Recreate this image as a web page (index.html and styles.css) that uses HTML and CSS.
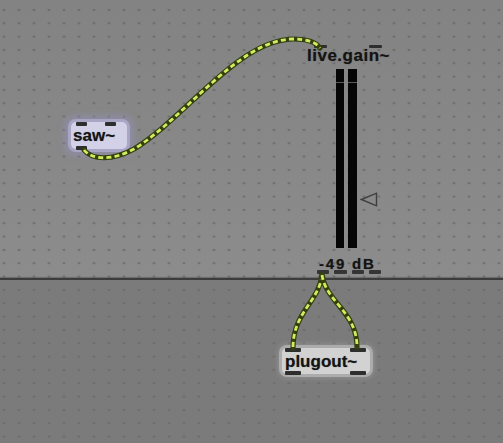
FILE: index.html
```html
<!DOCTYPE html>
<html>
<head>
<meta charset="utf-8">
<link rel="stylesheet" href="styles.css">
</head>
<body>
<div class="patcher">
  <div class="upper"></div>
  <div class="divider"></div>
  <div class="lower"></div>

  <div class="obj saw">
    <span class="port in in-l"></span>
    <span class="port in in-r"></span>
    <span class="label">saw~</span>
    <span class="port out out-l"></span>
  </div>

  <div class="gain">
    <span class="port gain-in gin-l"></span>
    <span class="port gain-in gin-r"></span>
    <div class="gain-title">live.gain~</div>
    <div class="meter">
      <div class="bar"><span class="seg"></span></div>
      <div class="bar bar-r"><span class="seg"></span></div>
    </div>
    <svg class="slider" width="18" height="15" viewBox="0 0 18 15"><polygon points="16.5,1.2 16.5,13.8 1.5,7.5" fill="none" stroke="#3e3e3e" stroke-width="1.4"/></svg>
    <div class="gain-value">-49 dB</div>
    <div class="gain-outs">
      <span class="port gout"></span>
      <span class="port gout"></span>
      <span class="port gout"></span>
      <span class="port gout"></span>
    </div>
  </div>

  <div class="obj plugout">
    <span class="port in pin-l"></span>
    <span class="port in pin-r"></span>
    <span class="label">plugout~</span>
    <span class="port out pout-l"></span>
    <span class="port out pout-r"></span>
  </div>

  <svg class="cords" width="503" height="443" viewBox="0 0 503 443">
    <g fill="none" stroke-linecap="round">
      <path class="cord-bg" d="M84 150 C 92 160, 112 161, 134 149 C 185 118, 238 40, 293 39 C 306 39, 316 42, 320 48"/>
      <path class="cord-fg" d="M84 150 C 92 160, 112 161, 134 149 C 185 118, 238 40, 293 39 C 306 39, 316 42, 320 48"/>
      <path class="cord-bg" d="M322 275 C 319 302, 293 312, 293 348"/>
      <path class="cord-fg" d="M322 275 C 319 302, 293 312, 293 348"/>
      <path class="cord-bg" d="M322 275 C 326 302, 357 312, 357 347"/>
      <path class="cord-fg" d="M322 275 C 326 302, 357 312, 357 347"/>
    </g>
  </svg>
</div>
</body>
</html>
```

FILE: styles.css
```css
html, body {
  margin: 0;
  padding: 0;
}
body {
  width: 503px;
  height: 443px;
  overflow: hidden;
  font-family: "Liberation Sans", Arial, sans-serif;
}
.patcher {
  position: relative;
  width: 503px;
  height: 443px;
  display: flex;
  flex-direction: column;
}
.upper {
  height: 278px;
  background:
    radial-gradient(circle, rgba(95,95,95,0.75) 0.8px, rgba(95,95,95,0) 1.5px) -3.5px 3.33px / 15px 13.333px,
    linear-gradient(#838383, #8c8c8c);
}
.divider {
  height: 2px;
  background: #3c3c3c;
  box-shadow: 0 1px 1px rgba(60,60,60,0.5), 0 -1px 1px rgba(60,60,60,0.4);
}
.lower {
  flex: 1;
  background:
    radial-gradient(circle, rgba(95,95,95,0.6) 0.8px, rgba(95,95,95,0) 1.5px) -3.5px 3.33px / 15px 13.333px,
    #7b7b7b;
}

.obj {
  position: absolute;
  box-sizing: border-box;
  border-radius: 5px;
  color: #141414;
  font-weight: bold;
  font-size: 17px;
  line-height: 1;
  text-shadow: 0 0 1px rgba(0,0,0,0.45);
}
.label {
  position: absolute;
  left: 2px;
  top: 5px;
}
.port {
  position: absolute;
  height: 4px;
  background: #2e2e2e;
  border-radius: 1px;
}
.saw {
  left: 71px;
  top: 122px;
  width: 56px;
  height: 27px;
  background: #d3d1e7;
  box-shadow: 0 0 0 3px rgba(176,172,206,0.8), 0 0 6px 7px rgba(150,146,190,0.5);
}
.saw .in { top: 0; width: 11px; }
.saw .in-l { left: 5px; }
.saw .in-r { left: 34px; }
.saw .out { bottom: -1px; width: 11px; }
.saw .out-l { left: 5px; }

.plugout {
  left: 282px;
  top: 348px;
  width: 88px;
  height: 26px;
  background: #d2d2d2;
  box-shadow: 0 0 0 3px rgba(195,195,195,0.6), 0 0 4px 5px rgba(170,170,170,0.35);
}
.plugout .label { left: 3px; top: 5px; }
.plugout .in { top: 0; width: 16px; }
.plugout .pin-l { left: 3px; }
.plugout .pin-r { left: 68px; }
.plugout .out { bottom: -1px; width: 16px; }
.plugout .pout-l { left: 3px; }
.plugout .pout-r { left: 68px; }

.gain {
  position: absolute;
  left: 306px;
  top: 44px;
  width: 92px;
  height: 232px;
  color: #141414;
  font-weight: bold;
  text-shadow: 0 0 1px rgba(0,0,0,0.45);
}
.gain-title {
  position: absolute;
  left: 1px;
  top: 3px;
  font-size: 17px;
  letter-spacing: 0.5px;
  line-height: 1;
}
.gain-in { top: 1px; width: 13px; height: 3px; }
.gin-l { left: 8px; }
.gin-r { left: 63px; }
.meter {
  position: absolute;
  left: 30px;
  top: 25px;
  height: 179px;
  display: flex;
  gap: 4px;
}
.bar {
  position: relative;
  width: 8px;
  height: 100%;
  background: #060606;
}
.bar-r { width: 9px; }
.seg {
  position: absolute;
  left: 0;
  right: 0;
  top: 13px;
  height: 1px;
  background: #5a5a5a;
}
.slider {
  position: absolute;
  left: 54px;
  top: 148px;
}
.gain-value {
  position: absolute;
  left: 13px;
  top: 212px;
  font-size: 15px;
  letter-spacing: 1.8px;
  line-height: 1;
}
.gain-outs {
  position: absolute;
  left: 11px;
  top: 226px;
  width: 64px;
  height: 4px;
  display: flex;
  gap: 5px;
}
.gout {
  position: static;
  flex: 1;
  height: 4px;
  background: #353535;
}

.cords {
  position: absolute;
  left: 0;
  top: 0;
  pointer-events: none;
}
.cord-bg {
  stroke: #34400e;
  stroke-width: 5.2;
}
.cord-fg {
  stroke: #d2ec60;
  stroke-width: 2.8;
  stroke-dasharray: 5 3.2;
  stroke-linecap: butt;
}
```
